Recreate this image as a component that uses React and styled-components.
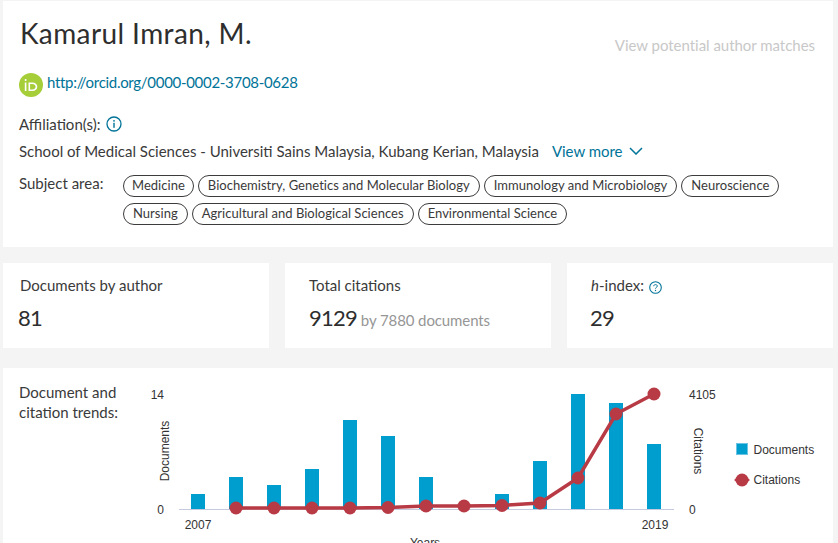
import React from "react";
import styled, { createGlobalStyle } from "styled-components";

const GlobalStyle = createGlobalStyle`
  html, body {
    margin: 0;
    height: 543px;
    overflow: hidden;
    background: #f4f4f4;
    font-family: "Lato", "Open Sans", sans-serif;
    color: #3a3a3a;
  }
`;

const subjects = [
  { name: "Medicine", pad: 8 },
  { name: "Biochemistry, Genetics and Molecular Biology" },
  { name: "Immunology and Microbiology" },
  { name: "Neuroscience" },
  { name: "Nursing" },
  { name: "Agricultural and Biological Sciences" },
  { name: "Environmental Science" },
];

const docBars = [
  [2007, 494],
  [2008, 477],
  [2009, 485],
  [2010, 469],
  [2011, 420],
  [2012, 436],
  [2013, 477],
  [2015, 494],
  [2016, 461],
  [2017, 394],
  [2018, 403],
  [2019, 444],
];

const citations = [
  [2008, 508],
  [2009, 508],
  [2010, 508],
  [2011, 508],
  [2012, 507.5],
  [2013, 506],
  [2014, 506],
  [2015, 505.5],
  [2016, 503],
  [2017, 478],
  [2018, 414],
  [2019, 394],
];

// x del centro de cada año, en px de la página
const CHART_LEFT = 130;
const CHART_TOP = 368;
const yearX = (year) => 198 + (year - 2007) * 38 - CHART_LEFT;

const Page = styled.div`
  width: 830px;
  padding: 1px 5px 0 3px;
  display: flex;
  flex-direction: column;
`;

const Card = styled.section`
  background: #fff;
`;

const ProfileCard = styled(Card)`
  height: 246px;
  box-sizing: border-box;
  padding: 14px 18px 0 16px;
`;

const Header = styled.div`
  display: flex;
  justify-content: space-between;
  align-items: flex-start;
`;

const Name = styled.h1`
  margin: 0;
  padding-left: 1px;
  font-size: 28px;
  line-height: 36px;
  font-weight: 400;
  letter-spacing: 0.4px;
  color: #2e2e2e;
`;

const Matches = styled.span`
  margin-top: 20px;
  font-size: 15px;
  line-height: 20px;
  letter-spacing: -0.03px;
  color: #c8c8c8;
`;

const OrcidRow = styled.div`
  display: flex;
  align-items: center;
  gap: 4px;
  margin-top: 17px;
  height: 26px;
`;

const Link = styled.a`
  color: #007398;
  font-size: 15px;
  line-height: 20px;
  text-decoration: none;
`;

const OrcidLink = styled(Link)`
  margin-top: -6px;
  letter-spacing: -0.3px;
`;

const Line = styled.div`
  display: flex;
  align-items: center;
  font-size: 15px;
  line-height: 20px;
`;

const AffiliationLabel = styled(Line)`
  margin-top: 16px;
  gap: 6px;
`;

const AffiliationText = styled(Line)`
  margin-top: 7px;
`;

const ViewMore = styled(Link)`
  margin-left: 13px;
  display: flex;
  align-items: center;
  gap: 7px;
  letter-spacing: -0.03px;
`;

const SubjectRow = styled.div`
  display: flex;
  margin-top: 14px;
`;

const SubjectLabel = styled.div`
  width: 104px;
  flex: none;
  margin-top: -2px;
  font-size: 15px;
  line-height: 20px;
`;

const Tags = styled.div`
  display: flex;
  flex-wrap: wrap;
  gap: 6px 4px;
  width: 690px;
`;

const Tag = styled.span`
  height: 22px;
  box-sizing: border-box;
  padding: 0 ${(props) => props.$pad || 9}px;
  border: 1px solid #3c3c3c;
  border-radius: 11px;
  font-size: 13px;
  line-height: 19px;
  letter-spacing: 0.03px;
  background: #fff;
`;

const StatsRow = styled.div`
  display: grid;
  grid-template-columns: repeat(3, 266px);
  column-gap: 16px;
  margin-top: 16px;
`;

const StatCard = styled(Card)`
  height: 85px;
  box-sizing: border-box;
  padding: 12px 16px 0 ${(props) => props.$left || 17}px;
`;

const StatLabel = styled.div`
  display: flex;
  align-items: center;
  gap: 5px;
  font-size: 15px;
  line-height: 20px;
`;

const StatValue = styled.div`
  margin-top: 8px;
  margin-left: ${(props) => props.$shift || 0}px;
  font-size: 22px;
  line-height: 30px;
  letter-spacing: -0.8px;
  color: #2e2e2e;
  display: flex;
  align-items: baseline;
  gap: 4px;
`;

const StatNote = styled.span`
  font-size: 15px;
  letter-spacing: -0.1px;
  color: #969696;
`;

const HelpSlot = styled.span`
  display: flex;
  margin-top: 4px;
`;

const TrendCard = styled(Card)`
  display: flex;
  margin-top: 20px;
  height: 175px;
  overflow: hidden;
`;

const TrendLabel = styled.div`
  width: 127px;
  flex: none;
  box-sizing: border-box;
  padding: 14px 0 0 16px;
  font-size: 15px;
  line-height: 20px;
`;

const AxisText = styled.text`
  font-family: "Liberation Sans", Arial, sans-serif;
  font-size: 12px;
  fill: #333;
`;

const OrcidIcon = () => (
  <svg width="24" height="24" viewBox="0 0 24 24" aria-hidden="true">
    <circle cx="12" cy="12" r="12" fill="#a6ce39" />
    <rect x="5.8" y="9.5" width="1.6" height="8.5" fill="#fff" />
    <circle cx="6.6" cy="6.9" r="1" fill="#fff" />
    <path
      d="M9.5 9.5h3.8c3 0 5 1.9 5 4.25s-2 4.25-5 4.25h-3.8zm1.6 1.4v5.7h2c2.2 0 3.5-1.3 3.5-2.85s-1.3-2.85-3.5-2.85z"
      fill="#fff"
      fillRule="evenodd"
    />
  </svg>
);

const InfoIcon = () => (
  <svg width="16" height="16" viewBox="0 0 16 16" aria-hidden="true">
    <circle cx="8" cy="8" r="7" fill="none" stroke="#007398" strokeWidth="1.3" />
    <rect x="7.3" y="6.8" width="1.4" height="5" fill="#007398" />
    <circle cx="8" cy="4.8" r="0.9" fill="#007398" />
  </svg>
);

const HelpIcon = () => (
  <svg width="13" height="13" viewBox="0 0 13 13" aria-hidden="true">
    <circle cx="6.5" cy="6.5" r="5.8" fill="none" stroke="#007398" strokeWidth="1.1" />
    <path
      d="M4.7 5.2c0-1 .8-1.6 1.8-1.6s1.8.6 1.8 1.5c0 1.3-1.8 1.3-1.8 2.5"
      fill="none"
      stroke="#007398"
    />
    <circle cx="6.5" cy="9.5" r="0.7" fill="#007398" />
  </svg>
);

const Chevron = () => (
  <svg width="14" height="8" viewBox="0 0 14 8" aria-hidden="true">
    <path d="M1 1l6 6 6-6" fill="none" stroke="#007398" strokeWidth="1.5" />
  </svg>
);

const TrendChart = () => {
  const y = (pageY) => pageY - CHART_TOP;
  const linePoints = citations
    .map(([year, py]) => `${yearX(year)},${y(py)}`)
    .join(" ");

  return (
    <svg width="703" height="175" viewBox="0 0 703 175">
      <line x1="49" x2="544" y1={y(509.5)} y2={y(509.5)} stroke="#c5cade" />
      {docBars.map(([year, top]) => (
        <rect
          key={year}
          x={yearX(year) - 7}
          y={y(top)}
          width="14"
          height={509 - top}
          fill="#009ecf"
        />
      ))}
      <polyline points={linePoints} fill="none" stroke="#b83a45" strokeWidth="3.5" />
      {citations.map(([year, py]) => (
        <circle key={year} cx={yearX(year)} cy={y(py)} r="6.5" fill="#b83a45" />
      ))}

      <AxisText x="34" y={y(399)} textAnchor="end">14</AxisText>
      <AxisText x="34" y={y(514)} textAnchor="end">0</AxisText>
      <AxisText x="68" y={y(529)} textAnchor="middle">2007</AxisText>
      <AxisText x="525" y={y(529)} textAnchor="middle">2019</AxisText>
      <AxisText x="559" y={y(399)}>4105</AxisText>
      <AxisText x="559" y={y(514)}>0</AxisText>
      <AxisText x="295" y={y(547)} textAnchor="middle">Years</AxisText>
      <AxisText transform={`translate(39 ${y(451)}) rotate(-90)`} textAnchor="middle">
        Documents
      </AxisText>
      <AxisText transform={`translate(564 ${y(451)}) rotate(90)`} textAnchor="middle">
        Citations
      </AxisText>

      <rect x="606.5" y={y(443.5)} width="11" height="11" fill="#009ecf" stroke="#6cc3e2" />
      <AxisText x="623.5" y={y(454)}>Documents</AxisText>
      <path d={`M604 ${y(480)}l8-6 8 6-8 6z`} fill="#b83a45" />
      <circle cx="612" cy={y(480)} r="6.5" fill="#b83a45" />
      <AxisText x="623.5" y={y(484)}>Citations</AxisText>
    </svg>
  );
};

export default function App() {
  return (
    <>
      <GlobalStyle />
      <Page>
        <ProfileCard>
          <Header>
            <Name>Kamarul Imran, M.</Name>
            <Matches>View potential author matches</Matches>
          </Header>
          <OrcidRow>
            <OrcidIcon />
            <OrcidLink href="#">http://orcid.org/0000-0002-3708-0628</OrcidLink>
          </OrcidRow>
          <AffiliationLabel>
            Affiliation(s):
            <InfoIcon />
          </AffiliationLabel>
          <AffiliationText>
            School of Medical Sciences - Universiti Sains Malaysia, Kubang Kerian, Malaysia
            <ViewMore href="#">
              View more
              <Chevron />
            </ViewMore>
          </AffiliationText>
          <SubjectRow>
            <SubjectLabel>Subject area:</SubjectLabel>
            <Tags>
              {subjects.map((subject) => (
                <Tag key={subject.name} $pad={subject.pad}>
                  {subject.name}
                </Tag>
              ))}
            </Tags>
          </SubjectRow>
        </ProfileCard>

        <StatsRow>
          <StatCard>
            <StatLabel>Documents by author</StatLabel>
            <StatValue $shift={-2}>81</StatValue>
          </StatCard>
          <StatCard $left={24}>
            <StatLabel>Total citations</StatLabel>
            <StatValue>
              9129 <StatNote>by 7880 documents</StatNote>
            </StatValue>
          </StatCard>
          <StatCard $left={24}>
            <StatLabel>
              <span>
                <i>h</i>-index:
              </span>
              <HelpSlot>
                <HelpIcon />
              </HelpSlot>
            </StatLabel>
            <StatValue $shift={-1}>29</StatValue>
          </StatCard>
        </StatsRow>

        <TrendCard>
          <TrendLabel>
            Document and
            <br />
            citation trends:
          </TrendLabel>
          <TrendChart />
        </TrendCard>
      </Page>
    </>
  );
}
